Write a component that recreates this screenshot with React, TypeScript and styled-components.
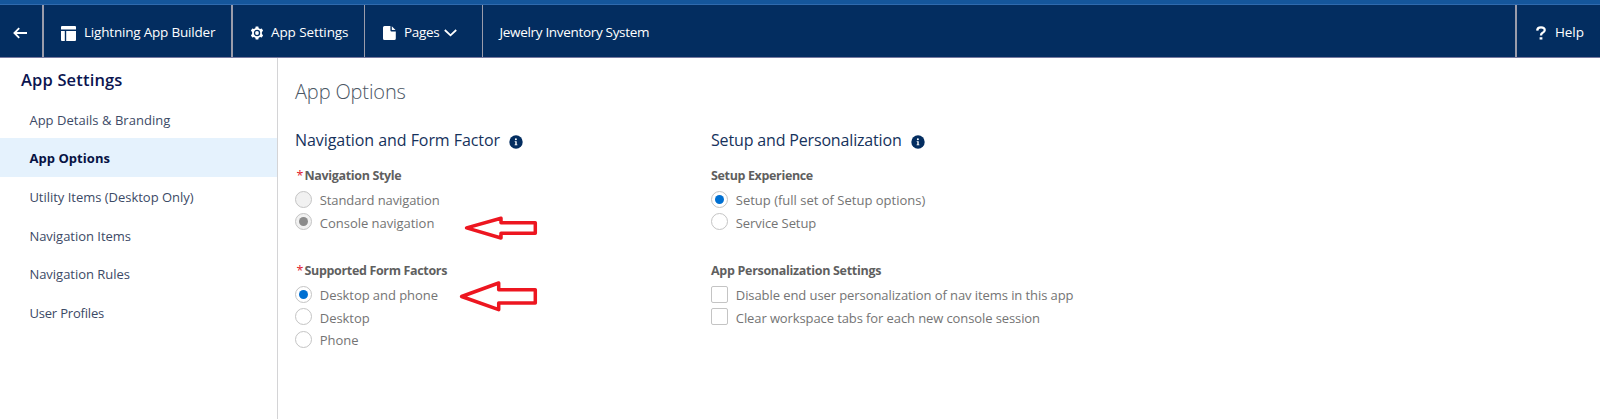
import React from "react";
import styled, { createGlobalStyle } from "styled-components";

const GlobalStyle = createGlobalStyle`
  *, *::before, *::after { box-sizing: border-box; }
  html, body { margin: 0; padding: 0; background: #fff; }
  body { font-family: "Open Sans", "Noto Sans", sans-serif; font-size: 13px; overflow: hidden; }
`;

const Page = styled.div`
  display: flex;
  flex-direction: column;
  width: 1600px;
  height: 419px;
  overflow: hidden;
`;

const TopStrip = styled.div`
  flex: none;
  height: 5px;
  background: #15569b;
  border-bottom: 1px solid #2f6aae;
`;

const Header = styled.header`
  flex: none;
  display: flex;
  height: 53px;
  background: #032d60;
  border-bottom: 1px solid #77799f;
`;

const HeaderCell = styled.div<{ $width: number; $pad: number; $line?: number }>`
  flex: none;
  display: flex;
  align-items: center;
  width: ${(p) => p.$width}px;
  padding-top: 2px;
  padding-left: ${(p) => p.$pad}px;
  border-right: ${(p) => p.$line ?? 0}px solid #9a9cab;
  color: #fff;
`;

const HeaderTitle = styled(HeaderCell)`
  flex: 1;
  width: auto;
`;

const HeaderText = styled.span<{ $gap?: number; $track?: number }>`
  margin-left: ${(p) => p.$gap ?? 0}px;
  font-size: 13.5px;
  font-weight: 500;
  line-height: 20px;
  letter-spacing: ${(p) => p.$track ?? 0}px;
  white-space: nowrap;
`;

const Icon = styled.svg<{ $left?: number; $top?: number }>`
  flex: none;
  display: block;
  margin-left: ${(p) => p.$left ?? 0}px;
  margin-top: ${(p) => p.$top ?? 0}px;
`;

const HeaderIcon = styled(Icon)`
  margin-top: 2px;
`;

const Body = styled.div`
  flex: 1;
  display: flex;
`;

const Sidebar = styled.nav`
  flex: none;
  width: 278px;
  border-right: 1px solid #d4d4d6;
`;

const SidebarTitle = styled.h1`
  margin: 0;
  padding: 11px 0 0 21px;
  height: 41.6px;
  color: #0b1550;
  font-size: 16.5px;
  font-weight: 600;
  line-height: 22px;
  letter-spacing: 0.16px;
`;

const SidebarItem = styled.div<{ $active?: boolean; $track?: number }>`
  height: 38.7px;
  padding: 2px 0 0 29.4px;
  background: ${(p) => (p.$active ? "#e5f2fd" : "transparent")};
  color: ${(p) => (p.$active ? "#071244" : "#3c4a66")};
  font-weight: ${(p) => (p.$active ? 700 : 400)};
  line-height: 37px;
  letter-spacing: ${(p) => p.$track ?? 0}px;
  white-space: nowrap;
`;

const Content = styled.main`
  position: relative;
  flex: 1;
  padding: 19px 0 0 17px;
`;

const PageTitle = styled.h2`
  margin: 0 0 24px;
  color: #4c5765;
  font-size: 20px;
  font-weight: 300;
  line-height: 29px;
  letter-spacing: -0.14px;
`;

const Columns = styled.div`
  display: grid;
  grid-template-columns: 416px 1fr;
`;

const SectionTitle = styled.h3<{ $track: number }>`
  display: flex;
  align-items: center;
  margin: 0 0 16px;
  height: 20px;
  color: #16325c;
  font-size: 16px;
  font-weight: 400;
  line-height: 20px;
  letter-spacing: ${(p) => p.$track}px;
  white-space: nowrap;
`;

const Group = styled.section`
  height: 95px;
`;

const GroupLabel = styled.div<{ $track: number }>`
  height: 20px;
  margin-bottom: 2.2px;
  color: #5f5f5f;
  font-size: 12.5px;
  font-weight: 700;
  line-height: 20px;
  letter-spacing: ${(p) => p.$track}px;
  white-space: nowrap;
`;

const Required = styled.span`
  display: inline-block;
  width: 8px;
  margin-left: 1.5px;
  color: #e0182c;
  font-weight: 400;
`;

const OptionRow = styled.label`
  display: flex;
  align-items: center;
  height: 22.5px;
`;

const Control = styled.span<{ $square?: boolean; $disabled?: boolean }>`
  flex: none;
  display: flex;
  align-items: center;
  justify-content: center;
  width: 17px;
  height: 17px;
  border: 1px solid #c4c4c4;
  border-radius: ${(p) => (p.$square ? "2px" : "50%")};
  background: ${(p) => (p.$disabled ? "#f1f1f1" : "#fff")};
`;

const Dot = styled.span<{ $disabled?: boolean }>`
  width: 9px;
  height: 9px;
  border-radius: 50%;
  background: ${(p) => (p.$disabled ? "#8b8b8b" : "#0070d2")};
`;

const OptionText = styled.span<{ $track: number }>`
  margin: 2px 0 0 7.8px;
  color: #747474;
  line-height: 20px;
  letter-spacing: ${(p) => p.$track}px;
  white-space: nowrap;
`;

const Annotations = styled.svg`
  position: absolute;
  left: 177px;
  top: 152px;
`;

interface OptionProps {
  text: string;
  track: number;
  square?: boolean;
  checked?: boolean;
  disabled?: boolean;
}

const Option = ({ text, track, square, checked, disabled }: OptionProps) => (
  <OptionRow>
    <Control $square={square} $disabled={disabled}>
      {checked && <Dot $disabled={disabled} />}
    </Control>
    <OptionText $track={track}>{text}</OptionText>
  </OptionRow>
);

const InfoIcon = ({ left }: { left: number }) => (
  <Icon $left={left} $top={3} width="14" height="14" viewBox="0 0 14 14">
    <circle cx="7" cy="7" r="6.7" fill="#032d60" />
    <circle cx="6.9" cy="4.2" r="1" fill="#fff" />
    <path d="M5.7 6.2H7.7V9.4H8.4V10.2H5.6V9.4H6.3V7H5.7Z" fill="#fff" />
  </Icon>
);

const navItems = [
  { text: "App Details & Branding", track: 0.03 },
  { text: "App Options", track: 0.06, active: true },
  { text: "Utility Items (Desktop Only)", track: -0.02 },
  { text: "Navigation Items", track: -0.02 },
  { text: "Navigation Rules", track: -0.02 },
  { text: "User Profiles", track: -0.18 },
];

export default function App() {
  return (
    <Page>
      <GlobalStyle />
      <TopStrip />
      <Header>
        <HeaderCell $width={44} $pad={13} $line={2}>
          <HeaderIcon width="15" height="12" viewBox="0 0 15 12" fill="none" stroke="#fff" strokeWidth="1.8">
            <path d="M14 6H2M6.2 1.2L1.4 6L6.2 10.8" />
          </HeaderIcon>
        </HeaderCell>
        <HeaderCell $width={189} $pad={17} $line={2}>
          <HeaderIcon width="15" height="15" viewBox="0 0 15 15" fill="#fff">
            <path d="M1 0H14Q15 0 15 1V3.6H0V1Q0 0 1 0ZM0 5H3.8V15H1Q0 15 0 14ZM5.2 5H15V14Q15 15 14 15H5.2Z" />
          </HeaderIcon>
          <HeaderText $gap={8} $track={-0.2}>Lightning App Builder</HeaderText>
        </HeaderCell>
        <HeaderCell $width={132} $pad={17} $line={1}>
          <HeaderIcon width="14" height="14" viewBox="0 0 14 14" fill="#fff">
            <path
              fillRule="evenodd"
              d="M5.7.4H8.3L8.7 2.2L10.1 3L11.8 2.4L13.1 4.7L11.9 6V8L13.1 9.3L11.8 11.6L10.1 11L8.7 11.8L8.3 13.6H5.7L5.3 11.8L3.9 11L2.2 11.6L.9 9.3L2.1 8V6L.9 4.7L2.2 2.4L3.9 3L5.3 2.2ZM7 3.8A3.2 3.2 0 1 0 7 10.2A3.2 3.2 0 1 0 7 3.8Z"
            />
            <circle cx="7" cy="7" r="1.9" />
          </HeaderIcon>
          <HeaderText $gap={7} $track={-0.1}>App Settings</HeaderText>
        </HeaderCell>
        <HeaderCell $width={118} $pad={18} $line={1}>
          <HeaderIcon width="13" height="14" viewBox="0 0 13 14" fill="#fff">
            <path d="M1.5 0H7.4V4.2Q7.4 5.4 8.6 5.4H12.8V12.5Q12.8 14 11.3 14H1.5Q0 14 0 12.5V1.5Q0 0 1.5 0ZM8.8 .3L12.5 4H9.3Q8.8 4 8.8 3.5Z" />
          </HeaderIcon>
          <HeaderText $gap={8} $track={-0.3}>Pages</HeaderText>
          <HeaderIcon $left={4.5} width="13" height="8" viewBox="0 0 13 8" fill="none" stroke="#fff" strokeWidth="1.8">
            <path d="M.8 1L6.5 6.3L12.2 1" />
          </HeaderIcon>
        </HeaderCell>
        <HeaderTitle $width={0} $pad={16.5} $line={2}>
          <HeaderText $track={-0.32}>Jewelry Inventory System</HeaderText>
        </HeaderTitle>
        <HeaderCell $width={83} $pad={19}>
          <HeaderIcon width="10" height="14" viewBox="0 0 10 14" fill="none" stroke="#fff" strokeWidth="2.3">
            <path d="M1.2 4.6Q1.3 1.4 5 1.4Q8.8 1.4 8.7 4.2Q8.6 5.8 6.6 6.8Q5 7.6 5 9.4" />
            <path d="M3.6 12.4H6.4" />
          </HeaderIcon>
          <HeaderText $gap={9} $track={-0.1}>Help</HeaderText>
        </HeaderCell>
      </Header>
      <Body>
        <Sidebar>
          <SidebarTitle>App Settings</SidebarTitle>
          {navItems.map((item) => (
            <SidebarItem key={item.text} $active={item.active} $track={item.track}>
              {item.text}
            </SidebarItem>
          ))}
        </Sidebar>
        <Content>
          <PageTitle>App Options</PageTitle>
          <Columns>
            <div>
              <SectionTitle $track={-0.06}>
                Navigation and Form Factor
                <InfoIcon left={8.5} />
              </SectionTitle>
              <Group>
                <GroupLabel $track={-0.34}><Required>*</Required>Navigation Style</GroupLabel>
                <Option text="Standard navigation" track={-0.1} disabled />
                <Option text="Console navigation" track={-0.02} disabled checked />
              </Group>
              <Group>
                <GroupLabel $track={-0.34}><Required>*</Required>Supported Form Factors</GroupLabel>
                <Option text="Desktop and phone" track={-0.06} checked />
                <Option text="Desktop" track={-0.05} />
                <Option text="Phone" track={-0.05} />
              </Group>
            </div>
            <div>
              <SectionTitle $track={-0.16}>
                Setup and Personalization
                <InfoIcon left={9} />
              </SectionTitle>
              <Group>
                <GroupLabel $track={-0.35}>Setup Experience</GroupLabel>
                <Option text="Setup (full set of Setup options)" track={0} checked />
                <Option text="Service Setup" track={-0.08} />
              </Group>
              <Group>
                <GroupLabel $track={-0.3}>App Personalization Settings</GroupLabel>
                <Option text="Disable end user personalization of nav items in this app" track={-0.08} square />
                <Option text="Clear workspace tabs for each new console session" track={-0.1} square />
              </Group>
            </div>
          </Columns>
          <Annotations width="90" height="110" viewBox="455 210 90 110" fill="none" stroke="#ed1620" strokeWidth="3.5">
            <path d="M466.6 227.9L501 218.2V222.8H535.3V233.2H501V238Z" strokeLinejoin="round" />
            <path d="M461.6 296.5L498.7 283V289.8H535.3V302.9H498.7V309.7Z" strokeLinejoin="round" />
          </Annotations>
        </Content>
      </Body>
    </Page>
  );
}
